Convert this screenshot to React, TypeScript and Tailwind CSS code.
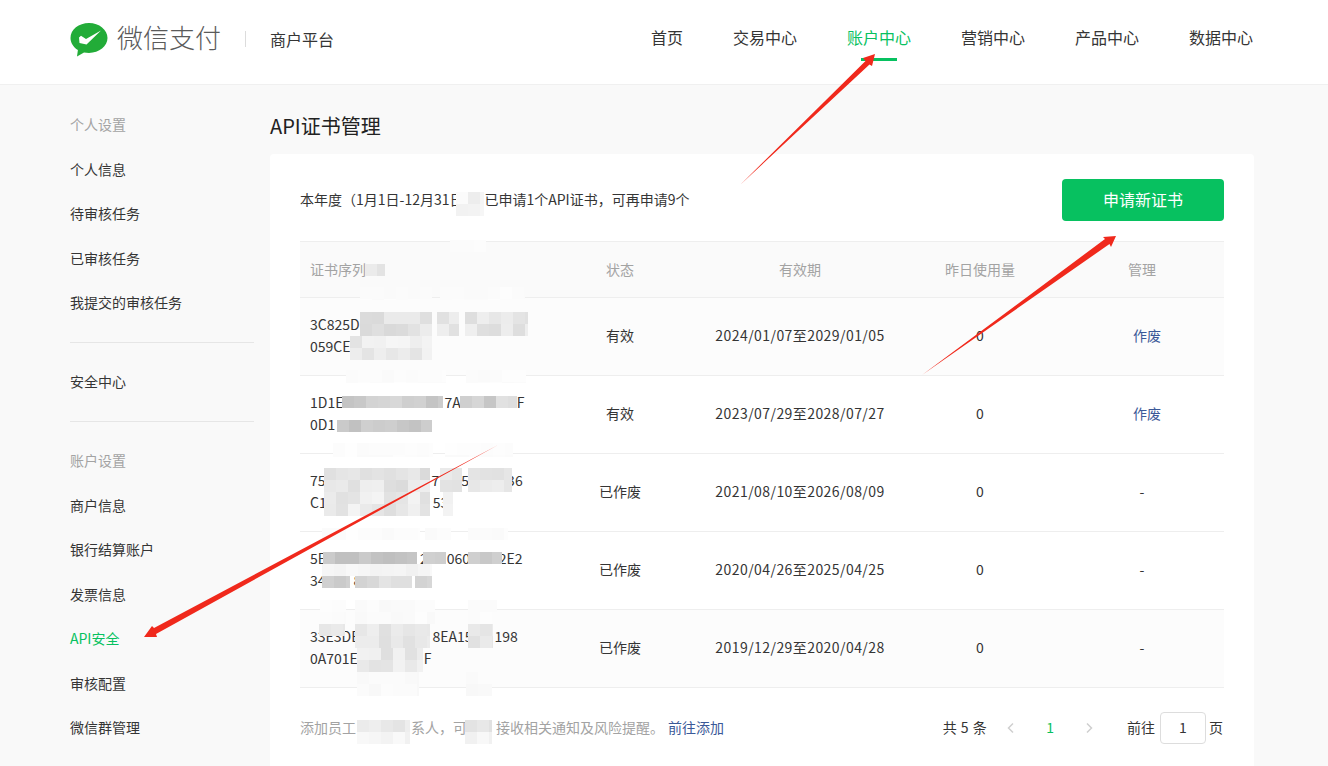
import React from "react";

const FONT = '"Noto Sans CJK SC", "Open Sans", sans-serif';

const NAV = ["首页", "交易中心", "账户中心", "营销中心", "产品中心", "数据中心"];

type Frag = string | number;
type Row = {
  lines: [Frag[], Frag[]];
  status: string;
  period: string;
  manage: string;
  shaded: boolean;
};

const ROWS: Row[] = [
  { lines: [["3C825D", 78, "8", 24, "1"], ["059CE"]], status: "有效", period: "2024/01/07至2029/01/05", manage: "作废", shaded: true },
  { lines: [["1D1E", 101, "7A", 56, "F"], ["0D1"]], status: "有效", period: "2023/07/29至2028/07/27", manage: "作废", shaded: false },
  { lines: [["75", 106, "7", 22, "5", 38, "36"], ["C1", 106, "53"]], status: "已作废", period: "2021/08/10至2026/08/09", manage: "-", shaded: false },
  { lines: [["5E", 94, "2", 19, "060A", 20, "2E2"], ["34", 28, "8"]], status: "已作废", period: "2020/04/26至2025/04/25", manage: "-", shaded: false },
  { lines: [["33E3DE", 73, "8EA15", 22, "198"], ["0A701E", 66, "F"]], status: "已作废", period: "2019/12/29至2020/04/28", manage: "-", shaded: true },
];

// x, y, w, h, lightest grey, darkest grey of a mosaic over redacted text
const PATCHES: [number, number, number, number, number, number][] = [
  [456, 192, 28, 24, 236, 252],
  [450, 240, 36, 12, 250, 253],
  [365, 264, 20, 12, 222, 236],
  [360, 287, 72, 13, 250, 253],
  [440, 287, 85, 13, 250, 253],
  [360, 312, 72, 24, 216, 238],
  [437, 312, 22, 24, 222, 238],
  [465, 312, 63, 24, 220, 240],
  [350, 336, 82, 24, 226, 246],
  [346, 370, 100, 13, 250, 254],
  [466, 370, 60, 13, 250, 254],
  [342, 396, 101, 12, 196, 216],
  [460, 396, 57, 12, 198, 232],
  [337, 420, 95, 12, 192, 222],
  [333, 443, 100, 14, 250, 254],
  [445, 443, 68, 14, 250, 254],
  [324, 468, 106, 24, 216, 240],
  [440, 468, 22, 24, 226, 246],
  [468, 468, 44, 24, 220, 238],
  [324, 492, 106, 24, 222, 246],
  [443, 492, 10, 24, 240, 250],
  [322, 528, 98, 12, 250, 254],
  [425, 528, 26, 12, 250, 254],
  [468, 528, 40, 12, 250, 254],
  [323, 552, 94, 12, 190, 216],
  [423, 552, 23, 12, 196, 216],
  [468, 552, 34, 12, 192, 212],
  [322, 564, 110, 12, 240, 250],
  [322, 576, 28, 12, 200, 216],
  [355, 576, 57, 12, 196, 230],
  [415, 576, 17, 12, 200, 216],
  [320, 600, 26, 24, 250, 253],
  [355, 600, 80, 24, 249, 253],
  [468, 600, 29, 24, 250, 253],
  [319, 624, 26, 12, 226, 238],
  [355, 624, 75, 24, 222, 238],
  [468, 624, 25, 24, 222, 236],
  [357, 648, 66, 24, 222, 242],
  [357, 672, 62, 24, 248, 253],
  [466, 672, 26, 24, 248, 253],
  [357, 720, 53, 12, 226, 238],
  [357, 732, 53, 12, 240, 250],
  [465, 720, 27, 12, 220, 234],
  [465, 732, 27, 12, 240, 250],
];

function Mosaic({ p, index }: { p: (typeof PATCHES)[number]; index: number }) {
  const [x, y, w, h, lo, hi] = p;
  const cols = Math.ceil(w / 12);
  const rows = Math.ceil(h / 12);
  const cells = [];
  for (let i = 0; i < cols * rows; i++) {
    const n = Math.abs(Math.sin((i + 1) * 12.9898 + index * 78.233)) * 43758.5453;
    const g = Math.round(lo + (n - Math.floor(n)) * (hi - lo));
    cells.push(<div key={i} className="h-3 w-3" style={{ background: `rgb(${g},${g},${g})` }} />);
  }
  return (
    <div
      className="absolute grid overflow-hidden"
      style={{ left: x, top: y, width: w, height: h, gridTemplateColumns: `repeat(${cols}, 12px)` }}
    >
      {cells}
    </div>
  );
}

function SideItem({ label, tone = "text-[#353535]" }: { label: string; tone?: string }) {
  return <div className={`flex h-[44.5px] items-center text-sm ${tone}`}>{label}</div>;
}

function Divider() {
  return <div className="mb-[15.75px] mt-[17.75px] h-px bg-[#e6e6e6]" />;
}

function Frags({ items }: { items: Frag[] }) {
  return (
    <div className="h-[22px] whitespace-nowrap leading-[22px]">
      {items.map((f, i) =>
        typeof f === "number" ? (
          <span key={i} className="inline-block" style={{ width: f }} />
        ) : (
          <span key={i}>{f}</span>
        )
      )}
    </div>
  );
}

const COLS = "grid grid-cols-[260px_120px_240px_120px_184px] items-center";

export default function App() {
  return (
    <div
      className="relative h-[766px] w-[1328px] overflow-hidden bg-[#f9f9f9] text-[#353535]"
      style={{ fontFamily: FONT }}
    >
      <header className="flex h-[85px] items-center border-b border-[#f0f0f0] bg-white pb-[7px] pl-[70px] pr-[75px]">
        <svg width="38" height="36" viewBox="0 0 38 36" className="mt-[3px]">
          <path
            d="M19 1C8.8 1 .5 7.5.5 16c0 5 3 9.200 7.400 12l-.9 6.600 7-4.200c1.600.300 3.200.500 5 .500 10.200 0 18.500-6.700 18.500-14.900S29.200 1 19 1z"
            fill="#22ac38"
          />
          <path d="M9 15.500l2-1.800 5 3.200L31 8.500 16.500 22.500 9.500 21z" fill="#fff" />
        </svg>
        <span className="mb-1 ml-[9px] text-[26px] font-light leading-none text-[#5a5a5a]">微信支付</span>
        <span className="ml-6 h-4 w-px bg-[#dcdcdc]" />
        <span className="ml-6 text-base text-[#353535]">商户平台</span>
        <nav className="mb-1 ml-auto flex items-center gap-[50px] text-base">
          {NAV.map((n) => (
            <div key={n} className={`relative ${n === "账户中心" ? "text-[#07c160]" : "text-[#353535]"}`}>
              {n}
              {n === "账户中心" && (
                <span className="absolute left-[14px] top-[33px] h-[3px] w-9 bg-[#07c160]" />
              )}
            </div>
          ))}
        </nav>
      </header>

      <div className="flex">
        <aside className="ml-[70px] w-[184px] pt-[16.75px]">
          <SideItem label="个人设置" tone="text-[#a3a3a3]" />
          <SideItem label="个人信息" />
          <SideItem label="待审核任务" />
          <SideItem label="已审核任务" />
          <SideItem label="我提交的审核任务" />
          <Divider />
          <SideItem label="安全中心" />
          <Divider />
          <SideItem label="账户设置" tone="text-[#a3a3a3]" />
          <SideItem label="商户信息" />
          <SideItem label="银行结算账户" />
          <SideItem label="发票信息" />
          <SideItem label="API安全" tone="text-[#07c160]" />
          <SideItem label="审核配置" />
          <SideItem label="微信群管理" />
        </aside>

        <main className="ml-4 w-[984px] pt-[27px]">
          <h1 className="mb-[14px] h-7 text-xl font-normal leading-7 text-[#222]">API证书管理</h1>
          <section className="h-[620px] rounded bg-white px-[30px] pt-[25px]">
            <div className="flex items-center justify-between">
              <p className="mb-[2px] text-sm">本年度（1月1日-12月31日），已申请1个API证书，可再申请9个</p>
              <button className="h-[42px] w-[162px] rounded bg-[#07c160] pb-[3px] text-base text-white">申请新证书</button>
            </div>

            <div className="mt-5 text-sm">
              <div className={`${COLS} h-[57px] border-y border-[#eeeeee] bg-[#fafafa] pb-[2px] text-[#a3a3a3]`}>
                <div className="pl-[10px]">证书序列</div>
                <div className="text-center">状态</div>
                <div className="text-center">有效期</div>
                <div className="text-center">昨日使用量</div>
                <div className="pl-5 text-center">管理</div>
              </div>
              {ROWS.map((r, i) => (
                <div
                  key={i}
                  className={`${COLS} h-[78px] border-b border-[#eeeeee] pb-[3px] ${r.shaded ? "bg-[#fcfcfc]" : "bg-white"}`}
                >
                  <div className="pl-[10px]">
                    <Frags items={r.lines[0]} />
                    <Frags items={r.lines[1]} />
                  </div>
                  <div className="text-center">{r.status}</div>
                  <div className="whitespace-nowrap text-center tracking-[0.43px]">{r.period}</div>
                  <div className="text-center">0</div>
                  {r.manage === "作废" ? (
                    <div className="pl-[30px] text-center text-[#3b5998]">{r.manage}</div>
                  ) : (
                    <div className="pl-5 text-center">{r.manage}</div>
                  )}
                </div>
              ))}
            </div>

            <div className="mt-6 flex h-8 items-center pr-px text-sm">
              <p className="mb-[2px] whitespace-nowrap text-[#a3a3a3]">
                添加员工
                <span className="inline-block w-[55px]" />
                系人，可
                <span className="inline-block w-[29px]" />
                接收相关通知及风险提醒。
                <span className="ml-1 text-[#3b5998]">前往添加</span>
              </p>
              <span className="mb-[2px] ml-auto whitespace-nowrap tracking-[0.5px]">共 5 条</span>
              <svg width="10" height="12" viewBox="0 0 10 12" className="ml-[19px]" fill="none" stroke="#cfcfcf" strokeWidth="1.500">
                <path d="M7 1.500 2.500 6 7 10.500" />
              </svg>
              <span className="mb-[2px] ml-[30px] text-[#07c160]">1</span>
              <svg width="10" height="12" viewBox="0 0 10 12" className="ml-[30px]" fill="none" stroke="#cfcfcf" strokeWidth="1.500">
                <path d="M3 1.500 7.500 6 3 10.500" />
              </svg>
              <span className="mb-[2px] ml-[33px]">前往</span>
              <span className="ml-[5px] flex h-8 w-[46px] items-center justify-center rounded border border-[#dddddd] pb-[2px]">1</span>
              <span className="mb-[2px] ml-[3px]">页</span>
            </div>
          </section>
        </main>
      </div>

      {/* mosaics that hide parts of the screenshot */}
      {PATCHES.map((p, i) => (
        <Mosaic key={i} p={p} index={i} />
      ))}

      {/* red annotation arrows drawn over the page */}
      <svg className="pointer-events-none absolute left-0 top-0" width="1328" height="766" viewBox="0 0 1328 766">
        <polygon points="740,185 865.500,61 863,58 875,54 872,66 869.500,64.500" fill="#f0291c" />
        <polygon points="922,375 1105,239 1103,237 1116,236 1111,247 1109.500,244" fill="#f0291c" />
        <polygon points="498,445 154,628 152,626 144,637 157,637 156,634" fill="#f0291c" />
      </svg>
    </div>
  );
}
